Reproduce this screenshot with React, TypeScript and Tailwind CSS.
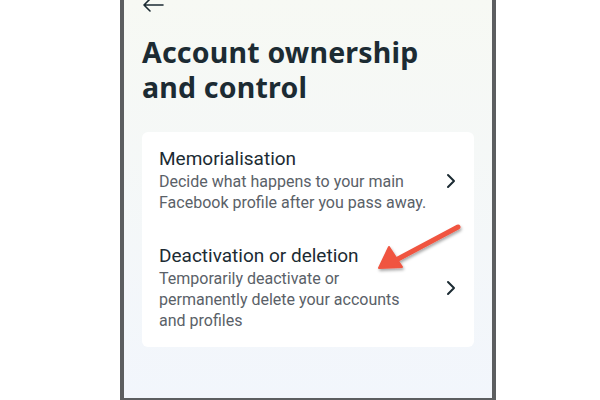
import React from 'react';

const Chevron: React.FC = () => (
  <svg width="10" height="16" viewBox="0 0 10 16" fill="none" className="shrink-0">
    <path d="M2 2l6 6-6 6" stroke="#1c2b33" strokeWidth="2" strokeLinecap="round" strokeLinejoin="round" />
  </svg>
);

const items = [
  {
    title: 'Memorialisation',
    lines: ['Decide what happens to your main', 'Facebook profile after you pass away.'],
  },
  {
    title: 'Deactivation or deletion',
    lines: ['Temporarily deactivate or', 'permanently delete your accounts', 'and profiles'],
  },
];

export default function App() {
  return (
    <div className="w-[600px] h-[400px] bg-white overflow-hidden" style={{ fontFamily: 'Roboto, "Noto Sans", sans-serif' }}>
      <div className="ml-[120px] w-[376px] h-[400px] border-x-4 border-b-2 border-[#5c5e60] bg-gradient-to-b from-[#f7f9f4] to-[#f2f6fc] relative">
        {/* top bar, cut off */}
        <div className="h-[16px] pl-[18px] flex items-start">
          <svg width="22" height="14" viewBox="0 0 22 14" fill="none" className="-mt-[2px]">
            <path d="M21 7H2M8 1L2 7l6 6" stroke="#1c2b33" strokeWidth="1.6" strokeLinecap="round" strokeLinejoin="round" />
          </svg>
        </div>

        <h1
          className="mt-[19px] pl-[18px] text-[28.5px] leading-[35px] font-bold text-[#1c2b33] tracking-[0.2px]"
          style={{ fontFamily: '"Noto Sans", Inter, sans-serif' }}
        >
          Account ownership
          <br />
          and control
        </h1>

        <div className="mx-[18px] mt-[27px] bg-white rounded-[6px] pt-[16px] pb-[16px] pl-[17px] pr-[18px] flex flex-col gap-[32px]">
          {items.map((item) => (
            <div key={item.title} className="flex items-center justify-between">
              <div>
                <div className="text-[19px] leading-[22px] text-[#1c2b33]">{item.title}</div>
                <div className="mt-[1px] text-[16px] leading-[21px] text-[#5a6168]">
                  {item.lines.map((l) => (
                    <div key={l}>{l}</div>
                  ))}
                </div>
              </div>
              <Chevron />
            </div>
          ))}
        </div>

        {/* annotation arrow */}
        <svg className="absolute left-0 top-0 pointer-events-none" width="376" height="400" viewBox="0 0 376 400">
          <defs>
            <filter id="sh" x="-20%" y="-20%" width="140%" height="140%">
              <feDropShadow dx="1" dy="2" stdDeviation="1.5" floodColor="#000" floodOpacity="0.35" />
            </filter>
          </defs>
          <g filter="url(#sh)" transform="translate(-120 0)">
            <line x1="454" y1="227" x2="392" y2="260" stroke="#f05440" strokeWidth="5" strokeLinecap="round" />
            <polygon points="375,268 385,247 398,267" fill="#f05440" stroke="#f05440" strokeWidth="2" strokeLinejoin="round" />
          </g>
        </svg>
      </div>
    </div>
  );
}
